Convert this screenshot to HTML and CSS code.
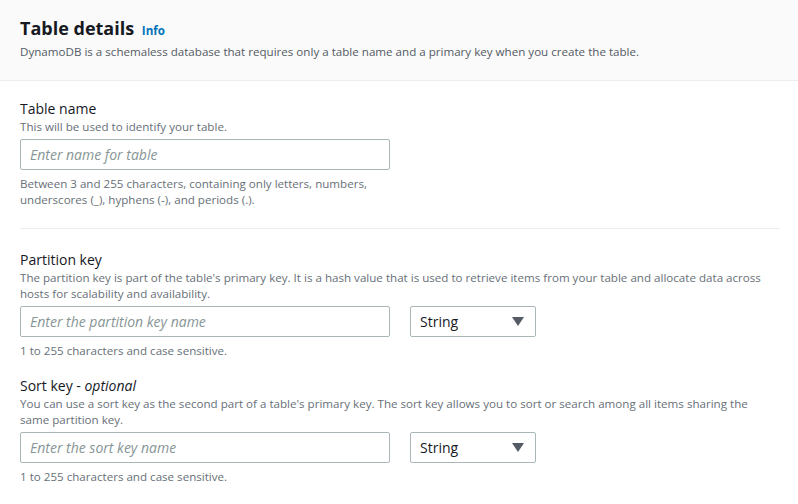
FILE: index.html
```html
<!DOCTYPE html>
<html>
<head>
<meta charset="utf-8">
<link rel="stylesheet" href="styles.css">
</head>
<body>
<div class="panel">
  <div class="header">
    <h2 class="title">Table details <a class="info">Info</a></h2>
    <p class="header-desc">DynamoDB is a schemaless database that requires only a table name and a primary key when you create the table.</p>
  </div>
  <div class="body">
    <div class="field first">
      <div class="label">Table name</div>
      <div class="desc">This will be used to identify your table.</div>
      <div class="control-row">
        <div class="input"><span class="ph">Enter name for table</span></div>
      </div>
      <div class="constraint">Between 3 and 255 characters, containing only letters, numbers,<br>underscores (_), hyphens (-), and periods (.).</div>
    </div>
    <div class="divider"></div>
    <div class="field second">
      <div class="label">Partition key</div>
      <div class="desc">The partition key is part of the table's primary key. It is a hash value that is used to retrieve items from your table and allocate data across hosts for scalability and availability.</div>
      <div class="control-row">
        <div class="input"><span class="ph">Enter the partition key name</span></div>
        <div class="select"><span>String</span><svg width="12" height="9" viewBox="0 0 12 9"><path d="M0 0h12L6 9z" fill="#545b64"/></svg></div>
      </div>
      <div class="constraint">1 to 255 characters and case sensitive.</div>
    </div>
    <div class="field">
      <div class="label">Sort key - <i>optional</i></div>
      <div class="desc">You can use a sort key as the second part of a table's primary key. The sort key allows you to sort or search among all items sharing the same partition key.</div>
      <div class="control-row">
        <div class="input"><span class="ph">Enter the sort key name</span></div>
        <div class="select"><span>String</span><svg width="12" height="9" viewBox="0 0 12 9"><path d="M0 0h12L6 9z" fill="#545b64"/></svg></div>
      </div>
      <div class="constraint">1 to 255 characters and case sensitive.</div>
    </div>
  </div>
</div>
</body>
</html>
```
FILE: styles.css
```css
html, body {
  margin: 0;
  padding: 0;
  background: #fff;
}
body {
  font-family: "Open Sans", "Noto Sans", sans-serif;
  color: #16191f;
  width: 798px;
  height: 504px;
  overflow: hidden;
}
.header {
  background: #fafafa;
  border-bottom: 1px solid #eaeded;
  padding: 16px 20px 0 20px;
  height: 64px;
}
.title {
  margin: 0;
  font-size: 18px;
  font-weight: 700;
  line-height: 24px;
  color: #16191f;
}
.info {
  font-size: 11.6px;
  font-weight: 700;
  color: #0073bb;
  margin-left: 3px;
}
.header-desc {
  margin: 0;
  font-size: 11.6px;
  line-height: 17px;
  color: #545b64;
}
.body {
  padding: 0 18px 0 20px;
}
.field {
  padding-top: 17px;
}
.field.first {
  padding-top: 18px;
}
.field.second {
  padding-top: 21px;
}
.label {
  font-size: 14px;
  line-height: 20px;
  color: #16191f;
}
.desc {
  font-size: 11.6px;
  line-height: 16px;
  color: #687078;
  max-width: 752px;
}
.control-row {
  display: flex;
  gap: 20px;
  margin-top: 4px;
}
.input {
  height: 29px;
  border: 1px solid #aab7b8;
  border-radius: 2px;
  display: flex;
  align-items: center;
  padding-left: 9px;
  width: 359px;
}
.ph {
  font-style: italic;
  font-size: 14px;
  color: #879596;
}
.select {
  width: 104px;
  height: 29px;
  border: 1px solid #aab7b8;
  border-radius: 2px;
  display: flex;
  align-items: center;
  justify-content: space-between;
  padding: 0 11px 0 9px;
  font-size: 14px;
  color: #16191f;
}
.constraint {
  margin-top: 6px;
  font-size: 11.6px;
  line-height: 16px;
  color: #687078;
}
.divider {
  margin-top: 20px;
  border-top: 1px solid #eaeded;
}
```
